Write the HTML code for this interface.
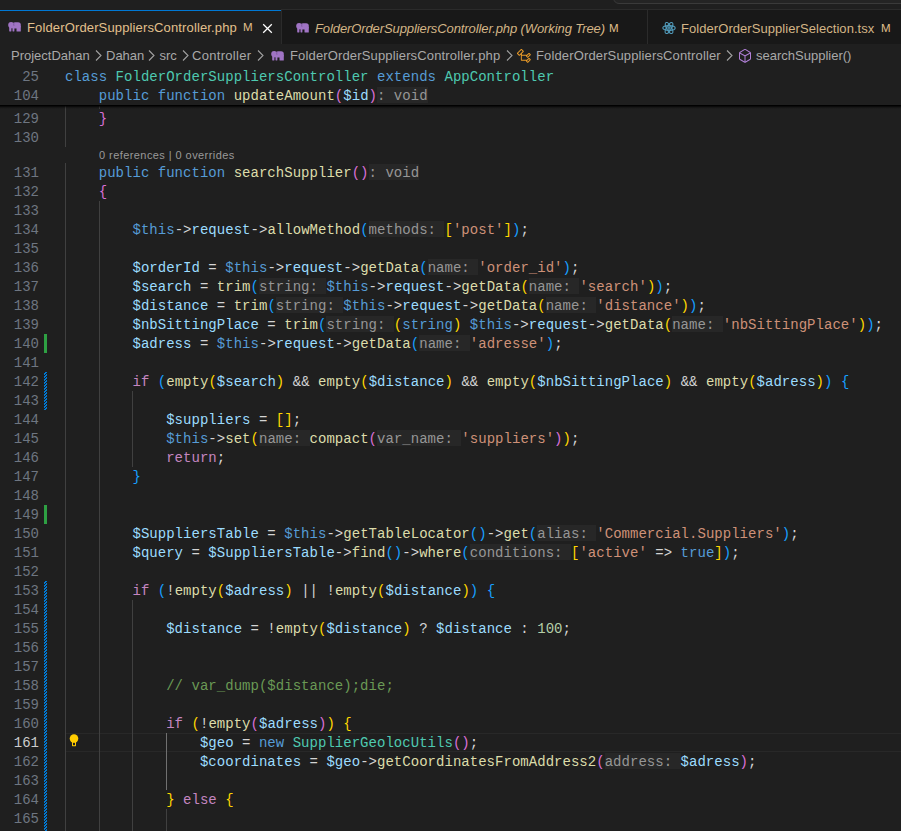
<!DOCTYPE html>
<html><head><meta charset="utf-8">
<style>
*{margin:0;padding:0;box-sizing:border-box}
svg{display:block}
html,body{width:901px;height:831px;overflow:hidden;background:#1f1f1f}
body{position:relative;font-family:"Liberation Sans",sans-serif;}
.abs{position:absolute}
#topstrip{position:absolute;left:0;top:0;width:901px;height:9px;background:#1f1f1f}
#cc{position:absolute;left:613px;top:-20px;width:400px;height:24px;border:1px solid #3a3a3a;border-radius:6px;background:#242424}
#tabs{position:absolute;left:0;top:9px;width:901px;height:36px;background:#181818;border-top:1px solid #2b2b2b;border-bottom:1px solid #2b2b2b}
.tab{position:absolute;top:9px;height:36px;background:#181818;border-left:1px solid #2b2b2b;border-top:1px solid #2b2b2b;border-bottom:1px solid #2b2b2b}
.tab.active{background:#1f1f1f;border-top:none;border-bottom:none;border-left:none}
.tab .tt{position:absolute;top:10px;font-size:13px;line-height:17px;color:#E2C08D;white-space:pre}
.tab.active .tt{color:#E2C08D}
.tab .ic{position:absolute;top:13px}
.tab .mm{position:absolute;top:9.5px;font-size:11.5px;line-height:17px;color:#E2C08D}
#bc{position:absolute;left:0;top:44px;width:901px;height:23px;background:#1f1f1f}
.bt{position:absolute;top:3px;font-size:13px;line-height:17px;color:#a9a9a9;white-space:pre}
.bi{position:absolute}
.ln{position:absolute;left:0;width:39px;padding-top:1px;text-align:right;font-family:"Liberation Mono",monospace;font-size:14px;line-height:19px;height:20px;color:#6e7681;letter-spacing:0.03px}
.ln.act{color:#cccccc}
.cl{position:absolute;left:65px;padding-top:1px;font-family:"Liberation Mono",monospace;font-size:14px;line-height:19px;height:20px;white-space:pre;color:#cccccc;letter-spacing:0.03px}
.k{color:#569CD6} .c{color:#C586C0} .t{color:#4EC9B0} .f{color:#DCDCAA} .v{color:#9CDCFE} .s{color:#CE9178} .n{color:#B5CEA8} .m{color:#6A9955} .o{color:#cccccc} .p{color:#D4D4D4}
.b1{color:#FFD700} .b2{color:#DA70D6} .b3{color:#179FFF}
.h{color:#969696;background:rgba(97,97,97,0.12);display:inline-block;vertical-align:top;height:16px;line-height:19px}
.ig{position:absolute;width:1px;background:#404040}
.ig.ia{background:#707070}
#sticky{position:absolute;left:0;top:67px;width:901px;height:38px;background:#1f1f1f}
#shadow{position:absolute;left:0;top:105px;width:901px;height:4px;background:linear-gradient(to bottom,rgba(0,0,0,1) 0,rgba(0,0,0,0.95) 1px,rgba(0,0,0,0.6) 1.6px,rgba(0,0,0,0.25) 2.6px,rgba(0,0,0,0) 4px)}
#lens{position:absolute;left:99px;top:147px;font-size:11px;letter-spacing:0.43px;line-height:16px;color:#999999;white-space:pre}
.gm{position:absolute;left:44px;width:3px}
.add{background:#2EA043}
.mod{background:repeating-linear-gradient(-45deg,#0078D4 0,#0078D4 1.2px,#1f1f1f 1.2px,#1f1f1f 2.4px)}
#curline{position:absolute;left:66px;top:733px;width:835px;height:19px;border-top:1px solid #282828;border-bottom:1px solid #282828}
</style></head><body>
<svg width="0" height="0" style="position:absolute"><defs><pattern id="modpat" width="3" height="3" patternUnits="userSpaceOnUse"><rect width="3" height="3" fill="#0078D4"/><rect x="0" y="0" width="1" height="1" fill="#1f1f1f"/><rect x="2" y="1" width="1" height="1" fill="#1f1f1f"/><rect x="1" y="2" width="1" height="1" fill="#1f1f1f"/></pattern></defs></svg>
<div id="topstrip"></div>
<div id="cc"></div>
<div id="tabs"></div>
<div class="tab active" style="left:0;width:281px">
  <div style="position:absolute;left:0;top:1px;width:281px;height:1px;background:#0078d4"></div>
  <div class="ic" style="left:8px"><svg width="13" height="10" viewBox="0 0 13 10"><g fill="#A074C4"><circle cx="3.1" cy="2.9" r="2.9"/><rect x="4.5" y="0.3" width="8.3" height="6.0" rx="2.6"/><rect x="1.2" y="4" width="2.2" height="5.5" rx="0.4"/><rect x="4.5" y="4" width="1.9" height="5.5" rx="0.4"/><rect x="8.5" y="4" width="4.3" height="5.5" rx="0.5"/><rect x="3" y="3" width="6" height="3.3"/></g><path d="M6.2 0.6C5.6 1.4 5.5 2.6 6 3.8" stroke="#6e4f8f" stroke-width="0.7" fill="none"/></svg></div>
  <div class="tt" style="left:27px;letter-spacing:0.14px">FolderOrderSuppliersController.php</div>
  <div class="mm" style="left:243px">M</div>
  <div class="abs" style="left:262px;top:14px"><svg width="11" height="11" viewBox="0 0 11 11"><path d="M1.2 1.2l8.6 8.6M9.8 1.2l-8.6 8.6" stroke="#ffffff" stroke-width="1.25"/></svg></div>
</div>
<div class="tab" style="left:281px;width:367px">
  <div class="ic" style="left:14px"><svg width="13" height="10" viewBox="0 0 13 10"><g fill="#A074C4"><circle cx="3.1" cy="2.9" r="2.9"/><rect x="4.5" y="0.3" width="8.3" height="6.0" rx="2.6"/><rect x="1.2" y="4" width="2.2" height="5.5" rx="0.4"/><rect x="4.5" y="4" width="1.9" height="5.5" rx="0.4"/><rect x="8.5" y="4" width="4.3" height="5.5" rx="0.5"/><rect x="3" y="3" width="6" height="3.3"/></g><path d="M6.2 0.6C5.6 1.4 5.5 2.6 6 3.8" stroke="#6e4f8f" stroke-width="0.7" fill="none"/></svg></div>
  <div class="tt" style="left:33px;font-style:italic;letter-spacing:-0.1px;color:#d3b586">FolderOrderSuppliersController.php (Working Tree)</div>
  <div class="mm" style="left:327px">M</div>
</div>
<div class="tab" style="left:647px;width:260px">
  <div class="ic" style="left:14px;top:12px"><svg width="14" height="12" viewBox="0 0 14 12" fill="none" stroke="#519ABA" stroke-width="1.1"><ellipse cx="7" cy="6" rx="6.2" ry="2.4"/><ellipse cx="7" cy="6" rx="6.2" ry="2.4" transform="rotate(60 7 6)"/><ellipse cx="7" cy="6" rx="6.2" ry="2.4" transform="rotate(120 7 6)"/><circle cx="7" cy="6" r="1.1"/></svg></div>
  <div class="tt" style="left:33px;letter-spacing:0.06px;color:#d3b586">FolderOrderSupplierSelection.tsx</div>
  <div class="mm" style="left:233px">M</div>
</div>
<div id="bc">
  <div class="bt" style="left:11px">ProjectDahan</div>
  <div class="bi" style="left:95px;top:6px"><svg width="7" height="11" viewBox="0 0 7 11"><path d="M1 0.5l5 5-5 5" fill="none" stroke="#a0a0a0" stroke-width="1.1"/></svg></div>
  <div class="bt" style="left:106px">Dahan</div>
  <div class="bi" style="left:148px;top:6px"><svg width="7" height="11" viewBox="0 0 7 11"><path d="M1 0.5l5 5-5 5" fill="none" stroke="#a0a0a0" stroke-width="1.1"/></svg></div>
  <div class="bt" style="left:159.5px">src</div>
  <div class="bi" style="left:181.5px;top:6px"><svg width="7" height="11" viewBox="0 0 7 11"><path d="M1 0.5l5 5-5 5" fill="none" stroke="#a0a0a0" stroke-width="1.1"/></svg></div>
  <div class="bt" style="left:192px;letter-spacing:0.3px">Controller</div>
  <div class="bi" style="left:257px;top:6px"><svg width="7" height="11" viewBox="0 0 7 11"><path d="M1 0.5l5 5-5 5" fill="none" stroke="#a0a0a0" stroke-width="1.1"/></svg></div>
  <div class="bi" style="left:271px;top:7px"><svg width="13" height="10" viewBox="0 0 13 10"><g fill="#A074C4"><circle cx="3.1" cy="2.9" r="2.9"/><rect x="4.5" y="0.3" width="8.3" height="6.0" rx="2.6"/><rect x="1.2" y="4" width="2.2" height="5.5" rx="0.4"/><rect x="4.5" y="4" width="1.9" height="5.5" rx="0.4"/><rect x="8.5" y="4" width="4.3" height="5.5" rx="0.5"/><rect x="3" y="3" width="6" height="3.3"/></g><path d="M6.2 0.6C5.6 1.4 5.5 2.6 6 3.8" stroke="#6e4f8f" stroke-width="0.7" fill="none"/></svg></div>
  <div class="bt" style="left:290px;letter-spacing:0.15px">FolderOrderSuppliersController.php</div>
  <div class="bi" style="left:506px;top:6px"><svg width="7" height="11" viewBox="0 0 7 11"><path d="M1 0.5l5 5-5 5" fill="none" stroke="#a0a0a0" stroke-width="1.1"/></svg></div>
  <div class="bi" style="left:516px;top:4px"><svg width="16" height="16" viewBox="0 0 16 16"><path fill="#EE9D28" d="M11.34 9.71h.71l2.67-2.67v-.71L13.38 5h-.7l-1.82 1.81h-5V5.56l1.86-1.85V3l-2-2H5L1 5v.71l2 2h.71l1.14-1.15v5.79l.5.5H10v.52l1.33 1.34h.71l2.67-2.67v-.71L13.37 10h-.7l-1.86 1.85h-5v-4H10v.48l1.34 1.38zm1.69-3.650.63.63-2 2-.63-.63 2-2zm0 5 .63.63-2 2-.63-.63 2-2zM3.35 6.650 2.06 5.36l3.3-3.3 1.29 1.29-3.3 3.3z"/></svg></div>
  <div class="bt" style="left:536px;letter-spacing:0.14px">FolderOrderSuppliersController</div>
  <div class="bi" style="left:726px;top:6px"><svg width="7" height="11" viewBox="0 0 7 11"><path d="M1 0.5l5 5-5 5" fill="none" stroke="#a0a0a0" stroke-width="1.1"/></svg></div>
  <div class="bi" style="left:737px;top:4px"><svg width="16" height="16" viewBox="0 0 16 16"><path fill="#B180D7" d="M13.51 4l-5-3h-1l-5 3-.49.86v6l.49.85 5 3h1l5-3 .49-.85v-6L13.51 4zm-6 9.56l-4.5-2.7V5.7l4.5 2.45v5.41zM3.27 4.7l4.740-2.84 4.74 2.84-4.74 2.59L3.27 4.7zm9.74 6.16l-4.5 2.7V8.15l4.5-2.450v5.16z"/></svg></div>
  <div class="bt" style="left:756px">searchSupplier()</div>
</div>
<div id="curline"></div>
<div class="ig" style="left:65px;top:105px;height:42px"></div><div class="ig" style="left:99px;top:105px;height:4px"></div><div class="ig" style="left:65px;top:163px;height:668px"></div><div class="ig" style="left:99px;top:201px;height:630px"></div><div class="ig" style="left:132px;top:391px;height:76px"></div><div class="ig" style="left:132px;top:600px;height:231px"></div><div class="ig ia" style="left:166px;top:733px;height:57px"></div><div class="ig" style="left:166px;top:809px;height:22px"></div>
<div class="gm add" style="top:334px;height:19px"></div>
<svg class="abs" style="left:44px;top:372px" width="3" height="38"><rect width="3" height="38" fill="url(#modpat)"/></svg>
<div class="gm add" style="top:505px;height:19px"></div>
<svg class="abs" style="left:44px;top:581px" width="3" height="250"><rect width="3" height="250" fill="url(#modpat)"/></svg>
<div class="abs" style="left:68.5px;top:734px"><svg width="10" height="13" viewBox="0 0 10 13"><circle cx="5" cy="4.6" r="4.3" fill="#FFCC00"/><rect x="3" y="7" width="4" height="5.2" rx="0.6" fill="#FFCC00"/><rect x="4" y="8.8" width="2" height="2.4" fill="#1f1f1f"/></svg></div>
<div id="lens">0 references | 0 overrides</div>
<div class="ln" style="top:109px">129</div><div class="cl" style="top:109px"><span class="o">    </span><span class="b2">}</span></div><div class="ln" style="top:128px">130</div><div class="ln" style="top:163px">131</div><div class="cl" style="top:163px"><span class="k">    public function </span><span class="f">searchSupplier</span><span class="b2">()</span><span class="h">: void</span></div><div class="ln" style="top:182px">132</div><div class="cl" style="top:182px"><span class="o">    </span><span class="b2">{</span></div><div class="ln" style="top:201px">133</div><div class="ln" style="top:220px">134</div><div class="cl" style="top:220px"><span class="o">        </span><span class="k">$this</span><span class="p">-&gt;</span><span class="v">request</span><span class="p">-&gt;</span><span class="f">allowMethod</span><span class="b3">(</span><span class="h">methods: </span><span class="b1">[</span><span class="s">'post'</span><span class="b1">]</span><span class="b3">)</span><span class="p">;</span></div><div class="ln" style="top:239px">135</div><div class="ln" style="top:258px">136</div><div class="cl" style="top:258px"><span class="o">        </span><span class="v">$orderId</span><span class="p"> = </span><span class="k">$this</span><span class="p">-&gt;</span><span class="v">request</span><span class="p">-&gt;</span><span class="f">getData</span><span class="b3">(</span><span class="h">name: </span><span class="s">'order_id'</span><span class="b3">)</span><span class="p">;</span></div><div class="ln" style="top:277px">137</div><div class="cl" style="top:277px"><span class="o">        </span><span class="v">$search</span><span class="p"> = </span><span class="f">trim</span><span class="b3">(</span><span class="h">string: </span><span class="k">$this</span><span class="p">-&gt;</span><span class="v">request</span><span class="p">-&gt;</span><span class="f">getData</span><span class="b1">(</span><span class="h">name: </span><span class="s">'search'</span><span class="b1">)</span><span class="b3">)</span><span class="p">;</span></div><div class="ln" style="top:296px">138</div><div class="cl" style="top:296px"><span class="o">        </span><span class="v">$distance</span><span class="p"> = </span><span class="f">trim</span><span class="b3">(</span><span class="h">string: </span><span class="k">$this</span><span class="p">-&gt;</span><span class="v">request</span><span class="p">-&gt;</span><span class="f">getData</span><span class="b1">(</span><span class="h">name: </span><span class="s">'distance'</span><span class="b1">)</span><span class="b3">)</span><span class="p">;</span></div><div class="ln" style="top:315px">139</div><div class="cl" style="top:315px"><span class="o">        </span><span class="v">$nbSittingPlace</span><span class="p"> = </span><span class="f">trim</span><span class="b3">(</span><span class="h">string: </span><span class="b1">(</span><span class="k">string</span><span class="b1">)</span><span class="p"> </span><span class="k">$this</span><span class="p">-&gt;</span><span class="v">request</span><span class="p">-&gt;</span><span class="f">getData</span><span class="b1">(</span><span class="h">name: </span><span class="s">'nbSittingPlace'</span><span class="b1">)</span><span class="b3">)</span><span class="p">;</span></div><div class="ln" style="top:334px">140</div><div class="cl" style="top:334px"><span class="o">        </span><span class="v">$adress</span><span class="p"> = </span><span class="k">$this</span><span class="p">-&gt;</span><span class="v">request</span><span class="p">-&gt;</span><span class="f">getData</span><span class="b3">(</span><span class="h">name: </span><span class="s">'adresse'</span><span class="b3">)</span><span class="p">;</span></div><div class="ln" style="top:353px">141</div><div class="ln" style="top:372px">142</div><div class="cl" style="top:372px"><span class="o">        </span><span class="c">if</span><span class="p"> </span><span class="b3">(</span><span class="f">empty</span><span class="b1">(</span><span class="v">$search</span><span class="b1">)</span><span class="p"> &amp;&amp; </span><span class="f">empty</span><span class="b1">(</span><span class="v">$distance</span><span class="b1">)</span><span class="p"> &amp;&amp; </span><span class="f">empty</span><span class="b1">(</span><span class="v">$nbSittingPlace</span><span class="b1">)</span><span class="p"> &amp;&amp; </span><span class="f">empty</span><span class="b1">(</span><span class="v">$adress</span><span class="b1">)</span><span class="b3">)</span><span class="p"> </span><span class="b3">{</span></div><div class="ln" style="top:391px">143</div><div class="ln" style="top:410px">144</div><div class="cl" style="top:410px"><span class="o">            </span><span class="v">$suppliers</span><span class="p"> = </span><span class="b1">[]</span><span class="p">;</span></div><div class="ln" style="top:429px">145</div><div class="cl" style="top:429px"><span class="o">            </span><span class="k">$this</span><span class="p">-&gt;</span><span class="f">set</span><span class="b1">(</span><span class="h">name: </span><span class="f">compact</span><span class="b2">(</span><span class="h">var_name: </span><span class="s">'suppliers'</span><span class="b2">)</span><span class="b1">)</span><span class="p">;</span></div><div class="ln" style="top:448px">146</div><div class="cl" style="top:448px"><span class="o">            </span><span class="c">return</span><span class="p">;</span></div><div class="ln" style="top:467px">147</div><div class="cl" style="top:467px"><span class="o">        </span><span class="b3">}</span></div><div class="ln" style="top:486px">148</div><div class="ln" style="top:505px">149</div><div class="ln" style="top:524px">150</div><div class="cl" style="top:524px"><span class="o">        </span><span class="v">$SuppliersTable</span><span class="p"> = </span><span class="k">$this</span><span class="p">-&gt;</span><span class="f">getTableLocator</span><span class="b3">()</span><span class="p">-&gt;</span><span class="f">get</span><span class="b3">(</span><span class="h">alias: </span><span class="s">'Commercial.Suppliers'</span><span class="b3">)</span><span class="p">;</span></div><div class="ln" style="top:543px">151</div><div class="cl" style="top:543px"><span class="o">        </span><span class="v">$query</span><span class="p"> = </span><span class="v">$SuppliersTable</span><span class="p">-&gt;</span><span class="f">find</span><span class="b3">()</span><span class="p">-&gt;</span><span class="f">where</span><span class="b3">(</span><span class="h">conditions: </span><span class="b1">[</span><span class="s">'active'</span><span class="p"> =&gt; </span><span class="k">true</span><span class="b1">]</span><span class="b3">)</span><span class="p">;</span></div><div class="ln" style="top:562px">152</div><div class="ln" style="top:581px">153</div><div class="cl" style="top:581px"><span class="o">        </span><span class="c">if</span><span class="p"> </span><span class="b3">(</span><span class="p">!</span><span class="f">empty</span><span class="b1">(</span><span class="v">$adress</span><span class="b1">)</span><span class="p"> || !</span><span class="f">empty</span><span class="b1">(</span><span class="v">$distance</span><span class="b1">)</span><span class="b3">)</span><span class="p"> </span><span class="b3">{</span></div><div class="ln" style="top:600px">154</div><div class="ln" style="top:619px">155</div><div class="cl" style="top:619px"><span class="o">            </span><span class="v">$distance</span><span class="p"> = !</span><span class="f">empty</span><span class="b1">(</span><span class="v">$distance</span><span class="b1">)</span><span class="p"> ? </span><span class="v">$distance</span><span class="p"> : </span><span class="n">100</span><span class="p">;</span></div><div class="ln" style="top:638px">156</div><div class="ln" style="top:657px">157</div><div class="ln" style="top:676px">158</div><div class="cl" style="top:676px"><span class="o">            </span><span class="m">// var_dump($distance);die;</span></div><div class="ln" style="top:695px">159</div><div class="ln" style="top:714px">160</div><div class="cl" style="top:714px"><span class="o">            </span><span class="c">if</span><span class="p"> </span><span class="b1">(</span><span class="p">!</span><span class="f">empty</span><span class="b2">(</span><span class="v">$adress</span><span class="b2">)</span><span class="b1">)</span><span class="p"> </span><span class="b1">{</span></div><div class="ln act" style="top:733px">161</div><div class="cl" style="top:733px"><span class="o">                </span><span class="v">$geo</span><span class="p"> = </span><span class="k">new</span><span class="p"> </span><span class="t">SupplierGeolocUtils</span><span class="b2">()</span><span class="p">;</span></div><div class="ln" style="top:752px">162</div><div class="cl" style="top:752px"><span class="o">                </span><span class="v">$coordinates</span><span class="p"> = </span><span class="v">$geo</span><span class="p">-&gt;</span><span class="f">getCoordinatesFromAddress2</span><span class="b2">(</span><span class="h">address: </span><span class="v">$adress</span><span class="b2">)</span><span class="p">;</span></div><div class="ln" style="top:771px">163</div><div class="ln" style="top:790px">164</div><div class="cl" style="top:790px"><span class="o">            </span><span class="b1">}</span><span class="p"> </span><span class="c">else</span><span class="p"> </span><span class="b1">{</span></div><div class="ln" style="top:809px">165</div><div class="ln" style="top:828px">166</div>
<div id="sticky">
</div>
<div id="shadow"></div>
<div style="position:absolute;left:0;top:0">
<div class="ln" style="top:67px">25</div><div class="cl" style="top:67px"><span class="k">class </span><span class="t">FolderOrderSuppliersController</span><span class="p"> </span><span class="k">extends</span><span class="p"> </span><span class="t">AppController</span></div><div class="ln" style="top:86px">104</div><div class="cl" style="top:86px"><span class="o">    </span><span class="k">public function </span><span class="f">updateAmount</span><span class="b2">(</span><span class="v">$id</span><span class="b2">)</span><span class="h">: void</span></div>
</div>
</body></html>
